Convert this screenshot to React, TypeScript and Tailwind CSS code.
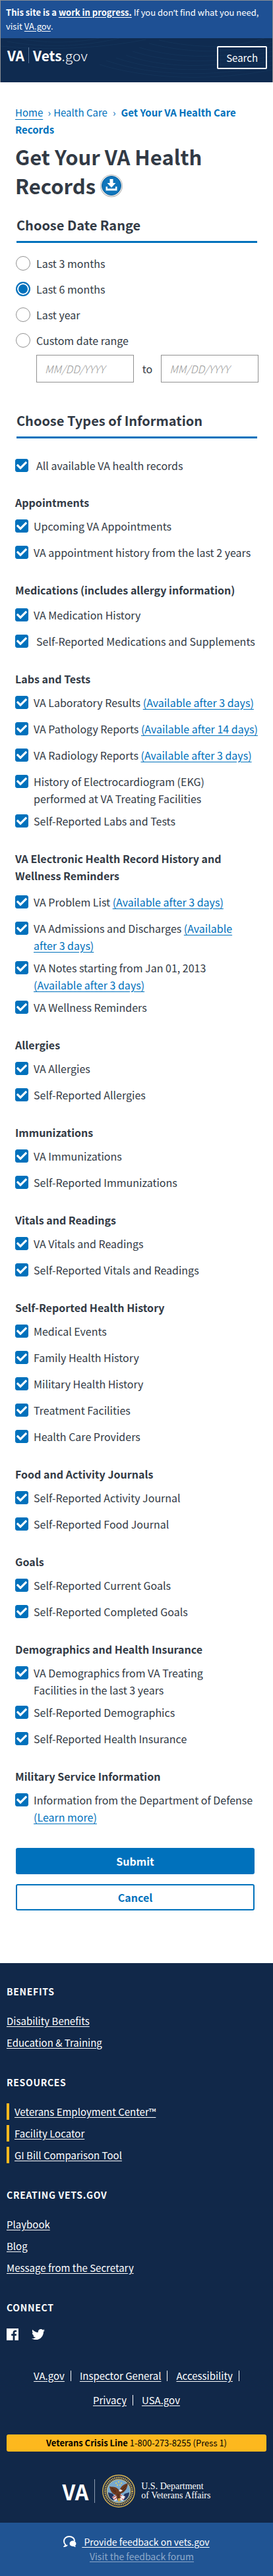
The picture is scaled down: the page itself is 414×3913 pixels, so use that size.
import React, { useState } from "react";
import { FaCheck, FaTwitter } from "react-icons/fa";

type Item = { label: string; rest?: string; link?: string; linkBreak?: boolean; inset?: boolean };
type Group = { title: string; spacing?: "wide" | "wider"; items: Item[] };

const groups: Group[] = [
  {
    title: "Appointments",
    items: [{ label: "Upcoming VA Appointments" }, { label: "VA appointment history from the last 2 years" }],
  },
  {
    title: "Medications (includes allergy information)",
    spacing: "wide",
    items: [{ label: "VA Medication History" }, { label: "Self-Reported Medications and Supplements", inset: true }],
  },
  {
    title: "Labs and Tests",
    items: [
      { label: "VA Laboratory Results", link: "(Available after 3 days)" },
      { label: "VA Pathology Reports", link: "(Available after 14 days)" },
      { label: "VA Radiology Reports", link: "(Available after 3 days)" },
      { label: "History of Electrocardiogram (EKG)", rest: "performed at VA Treating Facilities" },
      { label: "Self-Reported Labs and Tests" },
    ],
  },
  {
    title: "VA Electronic Health Record History and Wellness Reminders",
    spacing: "wider",
    items: [
      { label: "VA Problem List", link: "(Available after 3 days)" },
      { label: "VA Admissions and Discharges", link: "(Available\nafter 3 days)" },
      { label: "VA Notes starting from Jan 01, 2013", link: "(Available after 3 days)", linkBreak: true },
      { label: "VA Wellness Reminders" },
    ],
  },
  { title: "Allergies", items: [{ label: "VA Allergies" }, { label: "Self-Reported Allergies" }] },
  { title: "Immunizations", items: [{ label: "VA Immunizations" }, { label: "Self-Reported Immunizations" }] },
  {
    title: "Vitals and Readings",
    items: [{ label: "VA Vitals and Readings" }, { label: "Self-Reported Vitals and Readings" }],
  },
  {
    title: "Self-Reported Health History",
    items: [
      { label: "Medical Events" },
      { label: "Family Health History" },
      { label: "Military Health History" },
      { label: "Treatment Facilities" },
      { label: "Health Care Providers" },
    ],
  },
  {
    title: "Food and Activity Journals",
    items: [{ label: "Self-Reported Activity Journal" }, { label: "Self-Reported Food Journal" }],
  },
  { title: "Goals", items: [{ label: "Self-Reported Current Goals" }, { label: "Self-Reported Completed Goals" }] },
  {
    title: "Demographics and Health Insurance",
    items: [
      { label: "VA Demographics from VA Treating", rest: "Facilities in the last 3 years" },
      { label: "Self-Reported Demographics" },
      { label: "Self-Reported Health Insurance" },
    ],
  },
  {
    title: "Military Service Information",
    items: [{ label: "Information from the Department of Defense", link: "(Learn more)", linkBreak: true }],
  },
];

const ranges = ["Last 3 months", "Last 6 months", "Last year", "Custom date range"];

const slug = (text: string) => text.toLowerCase().replace(/[^a-z0-9]+/g, "-");

function Checkbox({ id }: { id: string }) {
  return (
    <span className="mt-[3px] grid h-5 w-5 shrink-0 place-items-center">
      <input
        id={id}
        type="checkbox"
        defaultChecked
        className="peer col-start-1 row-start-1 h-5 w-5 appearance-none rounded-[3px] border border-[#919191] bg-white checked:border-[#0071bc] checked:bg-[#0071bc]"
      />
      <FaCheck aria-hidden className="pointer-events-none col-start-1 row-start-1 hidden h-4 w-4 text-white peer-checked:block" />
    </span>
  );
}

function CheckRow({ item }: { item: Item }) {
  const id = slug(item.label);
  return (
    <li className={item.inset ? "flex min-h-10 gap-3 pb-2" : "flex min-h-10 gap-2 pb-2"}>
      <Checkbox id={id} />
      <div>
        <label htmlFor={id}>
          {item.label}
          {item.rest && (
            <>
              <br />
              {item.rest}
            </>
          )}
        </label>
        {item.link && (
          <>
            {item.linkBreak ? <br /> : " "}
            <a href="#availability" className="whitespace-pre-line text-[#0071bc] underline underline-offset-3">
              {item.link}
            </a>
          </>
        )}
      </div>
    </li>
  );
}

function SectionTitle({ children }: { children: React.ReactNode }) {
  return (
    <h2 className="ml-[2px] border-b-3 border-[#0071bc] pb-[10px] text-[20px] leading-7 font-bold">{children}</h2>
  );
}

function DownloadBadge() {
  return (
    <svg aria-hidden viewBox="0 0 36 36" className="h-9 w-9">
      <circle cx="18" cy="18.5" r="17" fill="#c9c9c9" />
      <circle cx="18" cy="18" r="16.4" fill="#fff" stroke="#aaa" strokeWidth=".8" />
      <circle cx="18" cy="18" r="14.5" fill="#0f75bb" stroke="#0a5c98" strokeWidth="1" />
      <path d="M15.5 8h5v6h4L18 21l-6.500-7h4z" fill="#fff" />
      <path d="M9.500 19.500h2.500v3h12v-3h2.500v6h-17z" fill="#fff" />
    </svg>
  );
}

function FooterGroup({ title, links, marked }: { title: string; links: string[]; marked?: boolean }) {
  return (
    <section className="mb-[35px]">
      <h3 className="mb-[19px] text-[14px] leading-[26px] font-bold tracking-wider uppercase">{title}</h3>
      <ul className="flex flex-col gap-2">
        {links.map((text) => (
          <li key={text} className={marked ? "border-l-4 border-[#fdb81e] pl-2 leading-[25px]" : "leading-[25px]"}>
            <a href="#footer" className="underline underline-offset-2">
              {text}
            </a>
          </li>
        ))}
      </ul>
    </section>
  );
}

function Seal() {
  return (
    <svg role="img" aria-label="Department seal" viewBox="0 0 50 50" className="h-[50px] w-[50px]">
      <circle cx="25" cy="25" r="24.200" fill="#17284f" stroke="#d9b650" strokeWidth="1.400" />
      <circle cx="25" cy="25" r="20.500" fill="none" stroke="#c9a94c" strokeWidth="3" strokeDasharray="1.600 1.100" />
      <circle cx="25" cy="25" r="17.800" fill="#78a9ce" stroke="#e2c566" strokeWidth="1" />
      <path d="M9 27l7 2 5 9-5 1c-4-2-7-7-7-12zM41 27l-7 2-5 9 5 1c4-2 7-7 7-12z" fill="#24345f" />
      <path d="M15 34l8-5 2 9-6 2zM35 34l-8-5-2 9 6 2z" fill="#e9e3e3" />
      <path d="M16 35l6-4M18 38l5-4M34 35l-6-4M32 38l-5-4" stroke="#b63a3f" strokeWidth="1.200" />
      <path d="M11 18c5 1 9 0 12 3l3 3 2-4c3-4 6-6 11-7-1 6-2 10-7 14l-4 2-1 8-4 2-2-8c-5-1-9-6-10-13z" fill="#6b3a20" />
      <path d="M14 20l7 5M16 24l5 3M37 16l-7 7M36 21l-5 5M24 29l1 8" stroke="#3e2114" strokeWidth=".9" />
      <path d="M27 22l4 2-3 2-3-1z" fill="#f4f0e6" />
      <path d="M30 32l5 1-3 3-4 1z" fill="#f7f7f7" />
      <path d="M24 36l3 0 1 4-4 1z" fill="#d5a93d" />
      <g fill="#f2d64f">
        <circle cx="21" cy="13" r="1" />
        <circle cx="25" cy="11" r="1" />
        <circle cx="29" cy="13" r="1" />
        <circle cx="23" cy="16" r="1" />
        <circle cx="27" cy="16" r="1" />
      </g>
    </svg>
  );
}

export default function App() {
  const [range, setRange] = useState("Last 6 months");
  return (
    <div className="min-h-screen bg-white font-['Noto_Sans_CJK_SC','Noto_Sans',sans-serif] text-[16px] leading-[26px] text-[#323a45]">
      <header className="border-x border-t border-[#8b8f94] text-white">
        <p className="bg-[#1e5094] px-2 pt-[7px] pb-2 text-[13px] leading-[21px]">
          <a href="#progress">
            <b>
              This site is a <span className="underline underline-offset-2">work in progress.</span>
            </b>
          </a>{" "}
          If you don<span className="font-['Noto_Sans',sans-serif] leading-none">’</span>t find what you need, visit{" "}
          <a href="#va" className="underline underline-offset-2">
            VA.gov
          </a>
          .
        </p>
        <div className="relative flex h-[67px] items-start justify-between overflow-hidden bg-[#0f2b50] pr-2 pl-[10px]">
          <svg aria-hidden viewBox="0 0 412 67" preserveAspectRatio="none" className="absolute inset-0 h-full w-full" fill="none" stroke="#1b4268" strokeWidth=".6" opacity=".6">
            <path d="M30 0C60 8 110 8 150 0M10 5C70 16 130 12 180 0M0 12C80 20 160 14 220 2" />
            <path d="M150 40C220 62 320 66 412 48M160 34C230 58 320 60 412 41M175 30C240 52 320 54 412 34M190 26C250 46 320 47 412 27M200 20C260 39 330 40 412 20M210 14C270 32 340 32 412 13M225 8C290 24 350 24 412 6M240 3C300 16 350 16 400 0" />
          </svg>
          <a href="#home" className="relative mt-[9px] flex items-center text-[21px] leading-[34px]">
            <b>VA</b>
            <span className="mx-[6px] h-6 w-px bg-[#5b7597]" />
            <b>Vets</b>
            <span className="font-light">.gov</span>
          </a>
          <button type="button" className="relative mt-3 h-[35px] rounded-[2px] border-2 border-white px-3 text-[15px] leading-[26px]">
            Search
          </button>
        </div>
      </header>

      <main className="pt-[33px] pr-6 pb-20 pl-[23px]">
        <nav aria-label="Breadcrumb" className="text-[15px] text-[#0071bc]">
          <a href="#home" className="mr-1 underline underline-offset-4">
            Home
          </a>{" "}
          <span className="mr-1">›</span>
          <a href="#care">Health Care</a>
          <span className="mx-2">›</span>
          <b>Get Your VA Health Care Records</b>
        </nav>
        <h1 className="mt-[6px] text-[31px] leading-[44px] font-bold">
          Get Your VA Health
          <span className="flex items-center gap-[6px]">
            Records <DownloadBadge />
          </span>
        </h1>

        <form>
          <div className="pt-6">
            <SectionTitle>Choose Date Range</SectionTitle>
          </div>
          <fieldset aria-label="Date range" className="mt-[18px] flex flex-col gap-[13px]">
            {ranges.map((r) => (
              <label key={r} className="ml-px flex items-center gap-[9px]">
                <input
                  type="radio"
                  name="range"
                  checked={range === r}
                  onChange={() => setRange(r)}
                  className="h-[22px] w-[22px] appearance-none rounded-full border border-[#919191] bg-white checked:border-2 checked:border-[#0071bc] checked:bg-[#0071bc] checked:shadow-[inset_0_0_0_2px_white]"
                />
                {r}
              </label>
            ))}
          </fieldset>
          <div className="mt-[9px] -mr-[2px] ml-8 flex items-center">
            <input
              type="text"
              aria-label="From date"
              placeholder="MM/DD/YYYY"
              className="h-[42px] min-w-0 flex-1 border border-[#919191] px-3 font-light placeholder:text-[#999] placeholder:italic"
            />
            <span className="px-[13px]">to</span>
            <input
              type="text"
              aria-label="To date"
              placeholder="MM/DD/YYYY"
              className="h-[42px] min-w-0 flex-1 border border-[#919191] px-3 font-light placeholder:text-[#999] placeholder:italic"
            />
          </div>

          <div className="pt-[44px]">
            <SectionTitle>Choose Types of Information</SectionTitle>
          </div>
          <div className="mt-7 mb-4 flex min-h-10 gap-3">
            <Checkbox id="all-records" />
            <label htmlFor="all-records">All available VA health records</label>
          </div>
          {groups.map((g) => (
            <section key={g.title} className="-mr-4 mb-[17px]">
              <h3
                className={
                  g.spacing === "wider" ? "mb-[14px] font-bold" : g.spacing === "wide" ? "mb-3 font-bold" : "mb-[10px] font-bold"
                }
              >
                {g.title}
              </h3>
              <ul>
                {g.items.map((item) => (
                  <CheckRow key={item.label} item={item} />
                ))}
              </ul>
            </section>
          ))}
          <div className="mt-[26px] mr-1 ml-px flex flex-col gap-[15px]">
            <button type="submit" className="h-10 rounded-[3px] bg-[#0071bc] font-bold text-white">
              Submit
            </button>
            <button type="button" className="h-10 rounded-[3px] border-2 border-[#0071bc] font-bold text-[#0071bc]">
              Cancel
            </button>
          </div>
        </form>
      </main>

      <footer className="bg-[#112849] text-[15px] text-white">
        <div className="px-[10px] pt-[30px] pb-[23px]">
          <FooterGroup title="Benefits" links={["Disability Benefits", "Education & Training"]} />
          <FooterGroup marked title="Resources" links={["Veterans Employment Center™", "Facility Locator", "GI Bill Comparison Tool"]} />
          <FooterGroup title="Creating Vets.gov" links={["Playbook", "Blog", "Message from the Secretary"]} />
          <h3 className="text-[14px] leading-[26px] font-bold tracking-wider uppercase">Connect</h3>
          <div className="mt-[18px] flex items-center gap-5">
            <a href="#facebook" aria-label="Facebook">
              <svg aria-hidden viewBox="0 0 18 18" className="h-[18px] w-[18px]" fill="#fff">
                <path d="M0 0h18v18h-5.600v-7h2.300l.4-2.700h-2.700V6.600c0-.8.200-1.300 1.300-1.300h1.400V2.900c-.2 0-1.100-.1-2.100-.1-2 0-3.400 1.200-3.400 3.500v2H7.200V11h2.400v7H0z" />
              </svg>
            </a>
            <a href="#twitter" aria-label="Twitter">
              <FaTwitter className="h-5 w-5" />
            </a>
          </div>
          <ul className="mt-10 flex flex-wrap justify-center gap-x-[13px] gap-y-3 px-8 leading-[25px]">
            {["VA.gov", "Inspector General", "Accessibility", "Privacy", "USA.gov"].map((t, i) => (
              <li key={t} className="flex items-center">
                <a href="#site" className="underline underline-offset-2">
                  {t}
                </a>
                {i < 4 && <span className="ml-[9px] h-4 w-px bg-white" />}
              </li>
            ))}
          </ul>
          <p className="mt-10 rounded-[3px] bg-[#fdb81e] text-center text-[13px] leading-[26px] text-black">
            <b>Veterans Crisis Line</b> 1-800-273-8255 (Press 1)
          </p>
          <div className="mt-[35px] flex items-center justify-center">
            <b className="text-[32px] leading-[50px]">VA</b>
            <span className="mr-[11px] ml-[9px] h-9 w-px bg-[#8c9bb0]" />
            <Seal />
            <p className="ml-[9px] font-['Liberation_Serif',serif] text-[14px] leading-[14px]">
              U.S. Department
              <br />
              of Veterans Affairs
            </p>
          </div>
        </div>
        <div className="bg-[#205493] pt-[18px] pb-[19px] text-center text-[14px] leading-[22px]">
          <div className="flex items-center justify-center gap-2">
            <svg aria-hidden viewBox="0 0 20 18" className="h-[18px] w-5" fill="none">
              <path d="M5.500 14.500C3.500 16 2 16 2 16c1-1 1.300-2 1.200-2.800C1.700 12 1 10 1 8c0-4 3.500-7 8-7s8 3 8 6.200" stroke="#fff" strokeWidth="2" strokeLinecap="round" />
              <path d="M14.500 7.500c2.800 0 4.900 1.900 4.900 4.300 0 1.400-.5 2.400-1.400 3.100 0 .8.500 1.500 1.200 2.100-1.300 0-2.500-.4-3.300-1.100-3.600.500-6.300-1.400-6.300-4.100 0-2.400 2.100-4.300 4.900-4.300z" fill="#fff" />
            </svg>
            <a href="#feedback" className="underline underline-offset-2">
              &nbsp;Provide feedback on vets.gov
            </a>
          </div>
          <a href="#forum" className="ml-4 text-[#8fa9c9] underline underline-offset-2">
            Visit the feedback forum
          </a>
        </div>
      </footer>
    </div>
  );
}
